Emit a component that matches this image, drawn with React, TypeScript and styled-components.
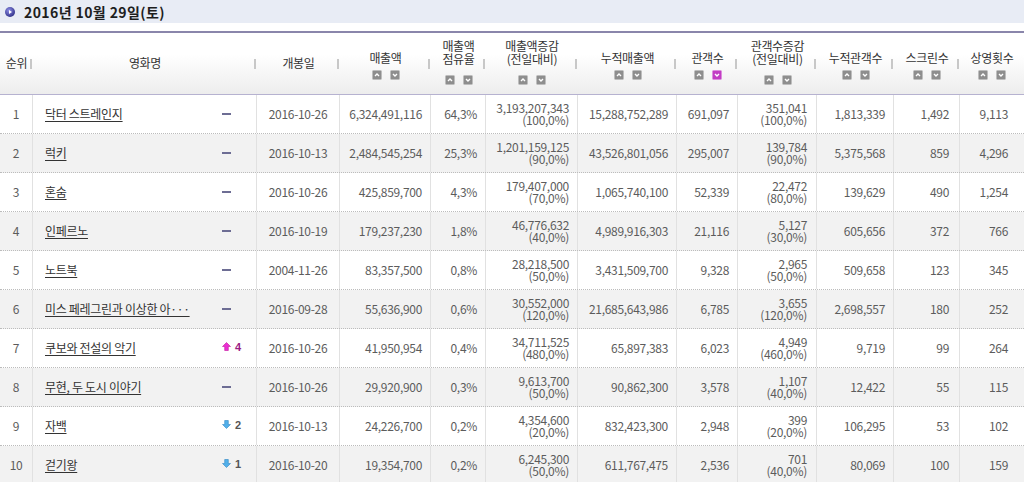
import React from "react";
import styled, { createGlobalStyle } from "styled-components";

const GlobalStyle = createGlobalStyle`
  html, body { margin: 0; padding: 0; background: #fff; overflow: hidden; }
  body { font-family: "Noto Sans CJK KR", "Liberation Sans", sans-serif; }
`;

const COLS = "33px 224px 83px 91px 55px 92px 99px 61px 79px 77px 66px 64px";

const Page = styled.div`
  width: 1024px;
`;

const TitleBar = styled.div`
  height: 23px;
  background: #e8ecf5;
  display: flex;
  align-items: center;
  gap: 9px;
  padding-left: 5px;
  margin-bottom: 8px;
  font-size: 14px;
  font-weight: bold;
  color: #1e1e1e;
  letter-spacing: 0.4px;
`;

const HeaderRow = styled.div`
  display: grid;
  grid-template-columns: ${COLS};
  height: 61px;
  border-top: 2px solid #8a86ab;
  border-bottom: 1px solid #b6b2d0;
  background: linear-gradient(#ffffff 0%, #ffffff 35%, #ededed 100%);
`;

const HeadCell = styled.div<{ $sep?: boolean; $double?: boolean; $sort?: boolean }>`
  display: flex;
  flex-direction: column;
  align-items: center;
  justify-content: center;
  font-size: 12px;
  line-height: 13px;
  color: #333;
  text-align: center;
  letter-spacing: -0.3px;
  white-space: nowrap;
  background: ${(p) =>
    p.$sep ? "linear-gradient(#c8c8c8, #c8c8c8) no-repeat right 1px center / 2px 10px" : "none"};
  padding-top: ${(p) => (p.$sort && !p.$double ? 4 : 0)}px;
  padding-bottom: ${(p) => (p.$double ? 4 : p.$sort ? 0 : 2)}px;
`;

const SortGroup = styled.div<{ $double?: boolean }>`
  display: flex;
  gap: 8px;
  margin-top: ${(p) => (p.$double ? 10 : 6)}px;
`;

const Row = styled.div<{ $alt: boolean }>`
  display: grid;
  grid-template-columns: ${COLS};
  height: 38px;
  border-bottom: 1px dotted #bcbcbc;
  background: ${(p) => (p.$alt ? "#f2f2f2" : "#ffffff")};
`;

const Cell = styled.div<{ $align: "center" | "right"; $pr?: number; $last?: boolean }>`
  display: flex;
  flex-direction: column;
  justify-content: center;
  align-items: ${(p) => (p.$align === "center" ? "center" : "flex-end")};
  padding-right: ${(p) => (p.$align === "center" ? 0 : p.$pr ?? 8)}px;
  border-right: ${(p) => (p.$last ? "none" : "1px solid #e1e1e1")};
  font-size: 12px;
  line-height: 12px;
  color: #5c5c5c;
  letter-spacing: -0.3px;
  white-space: nowrap;
  text-align: right;
`;

const DeltaLine = styled.span`
  display: block;
`;

const NameCell = styled.div`
  display: flex;
  align-items: center;
  justify-content: space-between;
  padding-left: 12px;
  border-right: 1px solid #e1e1e1;
`;

const Title = styled.a`
  font-size: 12px;
  line-height: 14px;
  color: #333;
  text-decoration: underline;
  text-underline-offset: 2px;
  letter-spacing: -0.3px;
  white-space: nowrap;
  cursor: pointer;
`;

const Change = styled.span<{ $tone?: "up" | "down" }>`
  display: flex;
  align-items: center;
  gap: 4px;
  width: 39px;
  box-sizing: border-box;
  padding-left: 5px;
  margin-top: -3px;
  font-family: "Liberation Sans", sans-serif;
  font-size: 11px;
  font-weight: bold;
  color: ${(p) => (p.$tone === "up" ? "#9a1c84" : "#555")};
`;

const Dash = styled.span`
  display: block;
  width: 9px;
  height: 2px;
  margin-top: 3px;
  background: #6d6d94;
`;

const Bullet = () => (
  <svg width="10" height="10" viewBox="0 0 10 10">
    <defs>
      <radialGradient id="bg" cx="40%" cy="35%" r="65%">
        <stop offset="0%" stopColor="#8f8fe6" />
        <stop offset="100%" stopColor="#34348c" />
      </radialGradient>
    </defs>
    <circle cx="5" cy="5" r="5" fill="url(#bg)" />
    <polygon points="4,3 7,5 4,7" fill="#fff" />
  </svg>
);

const SortBtn = ({ dir, active }: { dir: "up" | "down"; active?: boolean }) => (
  <svg width="10" height="10" viewBox="0 0 10 10">
    <rect
      x="0.5"
      y="0.5"
      width="9"
      height="9"
      rx="1"
      fill={active ? "#c23dc4" : "#8e8e8e"}
      stroke={active ? "#dc8ddd" : "#bdbdbd"}
    />
    <polyline
      points={dir === "up" ? "3,6 5,4 7,6" : "3,4 5,6 7,4"}
      fill="none"
      stroke="#fff"
      strokeWidth="1.4"
    />
  </svg>
);

const Arrow = ({ dir }: { dir: "up" | "down" }) =>
  dir === "up" ? (
    <svg width="9" height="9" viewBox="0 0 9 9">
      <polygon points="4.5,0.5 8.5,4.5 6.3,4.5 6.3,8.5 2.7,8.5 2.7,4.5 0.5,4.5" fill="#ea2fd2" stroke="#c4149f" strokeWidth="0.6" />
    </svg>
  ) : (
    <svg width="9" height="9" viewBox="0 0 9 9">
      <polygon points="2.7,0.5 6.3,0.5 6.3,4.5 8.5,4.5 4.5,8.5 0.5,4.5 2.7,4.5" fill="#52b0ea" stroke="#2f86c4" strokeWidth="0.6" />
    </svg>
  );

type Head = { lines: string[]; sort?: boolean; active?: boolean; sep?: boolean };

const heads: Head[] = [
  { lines: ["순위"], sep: true },
  { lines: ["영화명"], sep: true },
  { lines: ["개봉일"], sep: true },
  { lines: ["매출액"], sort: true, sep: true },
  { lines: ["매출액", "점유율"], sort: true, sep: true },
  { lines: ["매출액증감", "(전일대비)"], sort: true, sep: true },
  { lines: ["누적매출액"], sort: true, sep: true },
  { lines: ["관객수"], sort: true, active: true, sep: true },
  { lines: ["관객수증감", "(전일대비)"], sort: true, sep: true },
  { lines: ["누적관객수"], sort: true, sep: true },
  { lines: ["스크린수"], sort: true, sep: true },
  { lines: ["상영횟수"], sort: true },
];

type Movie = {
  rank: number;
  title: string;
  change: number;
  open: string;
  sales: string;
  share: string;
  salesDelta: [string, string];
  salesAcc: string;
  audi: string;
  audiDelta: [string, string];
  audiAcc: string;
  screens: string;
  shows: string;
};

const movies: Movie[] = [
  { rank: 1, title: "닥터 스트레인지", change: 0, open: "2016-10-26", sales: "6,324,491,116", share: "64,3%", salesDelta: ["3,193,207,343", "(100,0%)"], salesAcc: "15,288,752,289", audi: "691,097", audiDelta: ["351,041", "(100,0%)"], audiAcc: "1,813,339", screens: "1,492", shows: "9,113" },
  { rank: 2, title: "럭키", change: 0, open: "2016-10-13", sales: "2,484,545,254", share: "25,3%", salesDelta: ["1,201,159,125", "(90,0%)"], salesAcc: "43,526,801,056", audi: "295,007", audiDelta: ["139,784", "(90,0%)"], audiAcc: "5,375,568", screens: "859", shows: "4,296" },
  { rank: 3, title: "혼숨", change: 0, open: "2016-10-26", sales: "425,859,700", share: "4,3%", salesDelta: ["179,407,000", "(70,0%)"], salesAcc: "1,065,740,100", audi: "52,339", audiDelta: ["22,472", "(80,0%)"], audiAcc: "139,629", screens: "490", shows: "1,254" },
  { rank: 4, title: "인페르노", change: 0, open: "2016-10-19", sales: "179,237,230", share: "1,8%", salesDelta: ["46,776,632", "(40,0%)"], salesAcc: "4,989,916,303", audi: "21,116", audiDelta: ["5,127", "(30,0%)"], audiAcc: "605,656", screens: "372", shows: "766" },
  { rank: 5, title: "노트북", change: 0, open: "2004-11-26", sales: "83,357,500", share: "0,8%", salesDelta: ["28,218,500", "(50,0%)"], salesAcc: "3,431,509,700", audi: "9,328", audiDelta: ["2,965", "(50,0%)"], audiAcc: "509,658", screens: "123", shows: "345" },
  { rank: 6, title: "미스 페레그린과 이상한 아···", change: 0, open: "2016-09-28", sales: "55,636,900", share: "0,6%", salesDelta: ["30,552,000", "(120,0%)"], salesAcc: "21,685,643,986", audi: "6,785", audiDelta: ["3,655", "(120,0%)"], audiAcc: "2,698,557", screens: "180", shows: "252" },
  { rank: 7, title: "쿠보와 전설의 악기", change: 4, open: "2016-10-26", sales: "41,950,954", share: "0,4%", salesDelta: ["34,711,525", "(480,0%)"], salesAcc: "65,897,383", audi: "6,023", audiDelta: ["4,949", "(460,0%)"], audiAcc: "9,719", screens: "99", shows: "264" },
  { rank: 8, title: "무현, 두 도시 이야기", change: 0, open: "2016-10-26", sales: "29,920,900", share: "0,3%", salesDelta: ["9,613,700", "(50,0%)"], salesAcc: "90,862,300", audi: "3,578", audiDelta: ["1,107", "(40,0%)"], audiAcc: "12,422", screens: "55", shows: "115" },
  { rank: 9, title: "자백", change: -2, open: "2016-10-13", sales: "24,226,700", share: "0,2%", salesDelta: ["4,354,600", "(20,0%)"], salesAcc: "832,423,300", audi: "2,948", audiDelta: ["399", "(20,0%)"], audiAcc: "106,295", screens: "53", shows: "102" },
  { rank: 10, title: "걷기왕", change: -1, open: "2016-10-20", sales: "19,354,700", share: "0,2%", salesDelta: ["6,245,300", "(50,0%)"], salesAcc: "611,767,475", audi: "2,536", audiDelta: ["701", "(40,0%)"], audiAcc: "80,069", screens: "100", shows: "159" },
];

const ChangeMark = ({ value }: { value: number }) => {
  if (value === 0)
    return (
      <Change>
        <Dash />
      </Change>
    );
  const up = value > 0;
  return (
    <Change $tone={up ? "up" : "down"}>
      <Arrow dir={up ? "up" : "down"} />
      {Math.abs(value)}
    </Change>
  );
};

export default function App() {
  return (
    <Page>
      <GlobalStyle />
      <TitleBar>
        <Bullet />
        <span>2016년 10월 29일(토)</span>
      </TitleBar>
      <HeaderRow>
        {heads.map((h, i) => (
          <HeadCell key={i} $sep={h.sep} $double={h.lines.length > 1} $sort={h.sort}>
            {h.lines.map((l, j) => (
              <span key={j}>{l}</span>
            ))}
            {h.sort && (
              <SortGroup $double={h.lines.length > 1}>
                <SortBtn dir="up" />
                <SortBtn dir="down" active={h.active} />
              </SortGroup>
            )}
          </HeadCell>
        ))}
      </HeaderRow>
      {movies.map((m, i) => (
        <Row key={m.rank} $alt={i % 2 === 1}>
          <Cell $align="center">{m.rank}</Cell>
          <NameCell>
            <Title>{m.title}</Title>
            <ChangeMark value={m.change} />
          </NameCell>
          <Cell $align="center">{m.open}</Cell>
          <Cell $align="right">{m.sales}</Cell>
          <Cell $align="right">{m.share}</Cell>
          <Cell $align="right">
            <DeltaLine>{m.salesDelta[0]}</DeltaLine>
            <DeltaLine>{m.salesDelta[1]}</DeltaLine>
          </Cell>
          <Cell $align="right">{m.salesAcc}</Cell>
          <Cell $align="right">{m.audi}</Cell>
          <Cell $align="right" $pr={9}>
            <DeltaLine>{m.audiDelta[0]}</DeltaLine>
            <DeltaLine>{m.audiDelta[1]}</DeltaLine>
          </Cell>
          <Cell $align="right">{m.audiAcc}</Cell>
          <Cell $align="right" $pr={10}>{m.screens}</Cell>
          <Cell $align="right" $pr={16} $last>
            {m.shows}
          </Cell>
        </Row>
      ))}
    </Page>
  );
}
